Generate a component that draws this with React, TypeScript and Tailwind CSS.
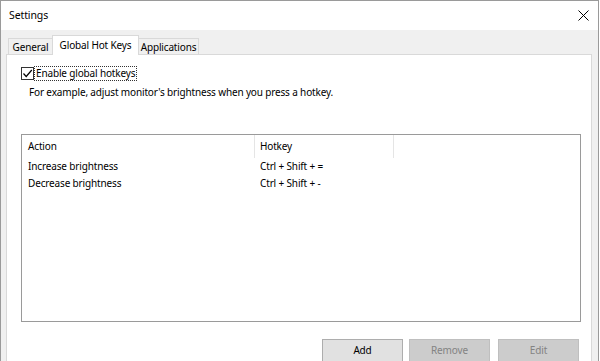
import React from 'react';

const font = { fontFamily: '"Noto Sans", "Open Sans", sans-serif' };

function Tab({ label, active, width }: { label: string; active?: boolean; width: string }) {
  if (active) {
    return (
      <div
        className={`relative z-10 -mb-px -ml-px flex h-[20px] items-start justify-center whitespace-nowrap border-x border-t border-[#d9d9d9] bg-white pt-[2px] text-[10px] tracking-[-0.15px] text-black ${width}`}
      >
        {label}
      </div>
    );
  }
  return (
    <div
      className={`-ml-px flex h-[16px] items-center justify-center whitespace-nowrap border-x border-t border-[#d9d9d9] bg-[#f0f0f0] text-[10px] leading-none tracking-[-0.15px] text-black first:ml-0 ${width}`}
    >
      {label}
    </div>
  );
}

function HotkeyRow({ action, keys }: { action: string; keys: string }) {
  return (
    <div className="flex h-[17px] items-center text-[10px] tracking-[-0.15px] text-black">
      <div className="w-[233px] pl-[6px]">{action}</div>
      <div className="pl-[5px]">{keys}</div>
    </div>
  );
}

export default function App() {
  return (
    <div className="h-[361px] w-[600px] overflow-hidden bg-white" style={font}>
      <div className="flex h-[400px] w-[599px] flex-col border-x border-t border-[#9a9a9a]">
        {/* title bar */}
        <div className="flex h-[29px] shrink-0 items-center justify-between bg-white pl-[8px] pr-[8px]">
          <span className="text-[10.5px] tracking-[-0.1px] text-black">Settings</span>
          <svg width="11" height="11" viewBox="0 0 11 11" className="mr-[1px]">
            <path d="M0.5 0.5 L10.5 10.5 M10.5 0.5 L0.5 10.5" stroke="#000" strokeWidth="1" />
          </svg>
        </div>

        {/* body */}
        <div className="flex flex-1 flex-col bg-[#f0f0f0] pl-[5px] pr-[6px] pt-[5px]">
          <div className="flex items-end pl-[2px]">
            <Tab label="General" width="w-[45px]" />
            <Tab label="Global Hot Keys" width="w-[87px]" active />
            <Tab label="Applications" width="w-[61px]" />
          </div>

          <div className="flex flex-1 flex-col border border-[#d9d9d9] bg-white pl-[14px] pt-[10px]">
            <div className="flex h-[16px] items-center">
              <div className="flex h-[13px] w-[13px] items-center justify-center border border-[#333] bg-white">
                <svg width="11" height="11" viewBox="0 0 11 11">
                  <path d="M1.5 5.5 L4.2 8.5 L9.8 2" fill="none" stroke="#000" strokeWidth="1.2" />
                </svg>
              </div>
              <span className="border border-dotted border-[#333] px-[1px] text-[10px] leading-[13px] tracking-[-0.15px] text-black">
                Enable global hotkeys
              </span>
            </div>
            <p className="mt-[3px] pl-[8px] text-[10px] leading-[17px] tracking-[-0.15px] text-black">
              For example, adjust monitor's brightness when you press a hotkey.
            </p>

            {/* hotkey list */}
            <div className="mt-[33px] h-[188px] w-[560px] border border-[#9a9a9a] bg-white">
              <div className="flex h-[23px] text-[10px] tracking-[-0.15px] text-black">
                <div className="flex w-[232px] items-center pl-[6px]">Action</div>
                <div className="w-px bg-[#e5e5e5]" />
                <div className="flex w-[138px] items-center pl-[5px]">Hotkey</div>
                <div className="w-px bg-[#e5e5e5]" />
              </div>
              <HotkeyRow action="Increase brightness" keys="Ctrl + Shift + =" />
              <HotkeyRow action="Decrease brightness" keys="Ctrl + Shift + -" />
            </div>

            <div className="mt-[17px] flex w-[560px] justify-end pr-[2px] text-[10px] tracking-[-0.15px]">
              <button className="h-[23px] w-[81px] border border-[#adadad] bg-[#e1e1e1] text-black">Add</button>
              <button className="ml-[6px] h-[23px] w-[81px] border border-[#bfbfbf] bg-[#cccccc] text-[#838383]">
                Remove
              </button>
              <button className="ml-[8px] h-[23px] w-[81px] border border-[#bfbfbf] bg-[#cccccc] text-[#838383]">
                Edit
              </button>
            </div>
          </div>
        </div>
      </div>
    </div>
  );
}
